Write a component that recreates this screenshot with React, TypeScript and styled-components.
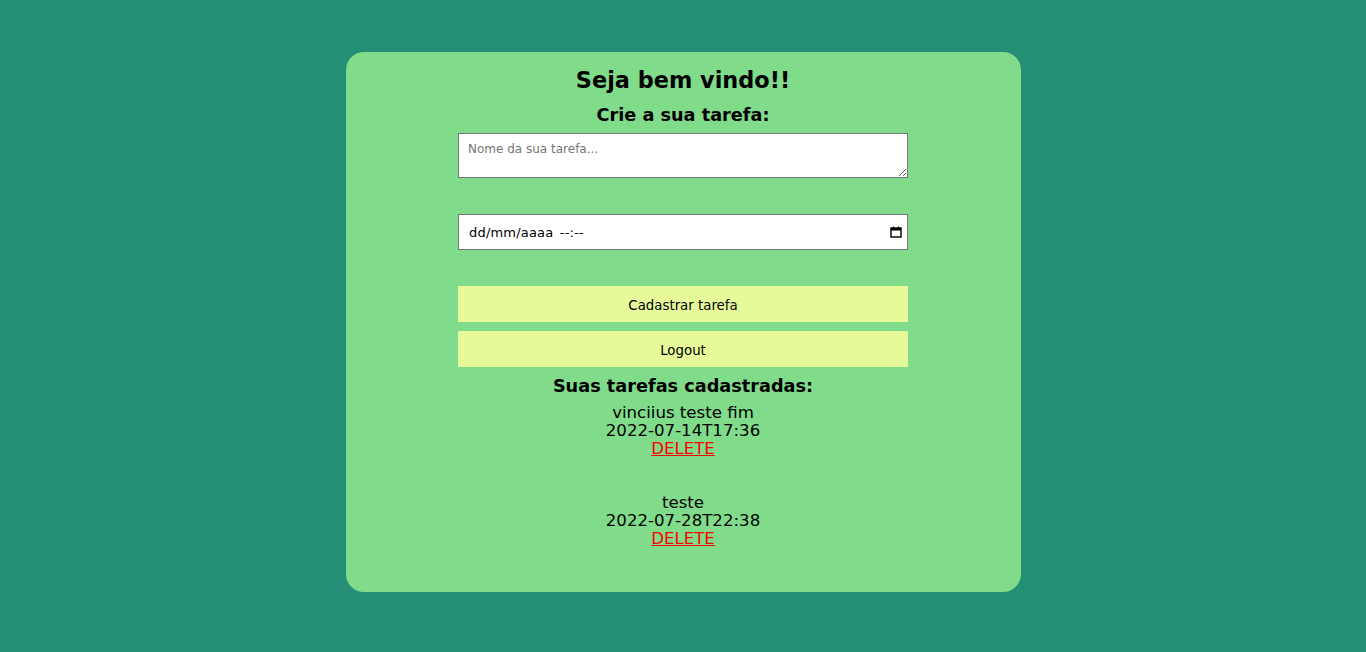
import React from "react";
import styled, { createGlobalStyle } from "styled-components";

const Global = createGlobalStyle`
  html, body { margin: 0; padding: 0; }
  body {
    background: #248F75;
    font-family: "DejaVu Sans", Verdana, sans-serif;
    min-height: 652px;
  }
`;

const Page = styled.div`
  display: flex;
  justify-content: center;
  align-items: flex-start;
  padding-top: 52px;
`;

const Card = styled.main`
  width: 675px;
  box-sizing: border-box;
  background: #80DB8A;
  border-radius: 18px;
  padding: 15px 0 44px;
  display: flex;
  flex-direction: column;
  align-items: center;
`;

const Title = styled.h1`
  margin: 0;
  font-size: 22.4px;
  font-weight: bold;
  line-height: 27px;
  color: #000;
`;

const SubTitle = styled.h2<{ $top: number; $bottom: number }>`
  margin: ${(p) => p.$top}px 0 ${(p) => p.$bottom}px;
  font-size: 17.7px;
  font-weight: bold;
  line-height: 21px;
  color: #000;
`;

const Form = styled.form`
  width: 450px;
  display: flex;
  flex-direction: column;
`;

const TextArea = styled.textarea`
  box-sizing: border-box;
  width: 450px;
  height: 45px;
  border: 1px solid #767676;
  padding: 8px 9px;
  font-family: "DejaVu Sans", Verdana, sans-serif;
  font-size: 12px;
  background: #fff;
  outline: none;
  &::placeholder { color: #757575; }
`;

const DateField = styled.div`
  box-sizing: border-box;
  margin-top: 36px;
  height: 36px;
  border: 1px solid #767676;
  background: #fff;
  display: flex;
  align-items: center;
  justify-content: space-between;
  padding: 0 4px 0 10px;
  font-family: "DejaVu Sans", Verdana, sans-serif;
  font-size: 13px;
  color: #000;
`;

const DateText = styled.span`
  letter-spacing: 0.2px;
  word-spacing: 2px;
`;

const Button = styled.button<{ $top: number }>`
  margin-top: ${(p) => p.$top}px;
  height: 36px;
  border: none;
  padding: 2px 0 0;
  background: #E7FA9A;
  font-family: "DejaVu Sans", Verdana, sans-serif;
  font-size: 13.33px;
  color: #000;
  cursor: pointer;
`;

const TaskList = styled.ul`
  list-style: none;
  margin: 7px 0 0;
  padding: 0;
  display: flex;
  flex-direction: column;
  gap: 36px;
  align-items: center;
`;

const Task = styled.li`
  display: flex;
  flex-direction: column;
  align-items: center;
  font-size: 16.6px;
  line-height: 18px;
  color: #000;
`;

const Delete = styled.a`
  color: #FF0000;
  text-decoration: underline;
  cursor: pointer;
`;

const CalendarIcon = () => (
  <svg width="14" height="14" viewBox="0 0 14 14" aria-hidden>
    <rect x="2" y="3" width="10" height="9" fill="none" stroke="#000" strokeWidth="1.4" />
    <rect x="2" y="3" width="10" height="2.5" fill="#000" />
    <rect x="4" y="1.5" width="1" height="2" fill="#000" />
    <rect x="9" y="1.5" width="1" height="2" fill="#000" />
  </svg>
);

const tasks = [
  { name: "vinciius teste fim", date: "2022-07-14T17:36" },
  { name: "teste", date: "2022-07-28T22:38" },
];

export default function App() {
  return (
    <>
      <Global />
      <Page>
        <Card>
          <Title>Seja bem vindo!!</Title>
          <SubTitle $top={11} $bottom={7}>Crie a sua tarefa:</SubTitle>
          <Form onSubmit={(e) => e.preventDefault()}>
            <TextArea placeholder="Nome da sua tarefa..." />
            <DateField>
              <DateText>dd/mm/aaaa --:--</DateText>
              <CalendarIcon />
            </DateField>
            <Button type="submit" $top={36}>Cadastrar tarefa</Button>
            <Button type="button" $top={9}>Logout</Button>
          </Form>
          <SubTitle $top={9} $bottom={0}>Suas tarefas cadastradas:</SubTitle>
          <TaskList>
            {tasks.map((t) => (
              <Task key={t.date}>
                <span>{t.name}</span>
                <span>{t.date}</span>
                <Delete>DELETE</Delete>
              </Task>
            ))}
          </TaskList>
        </Card>
      </Page>
    </>
  );
}
